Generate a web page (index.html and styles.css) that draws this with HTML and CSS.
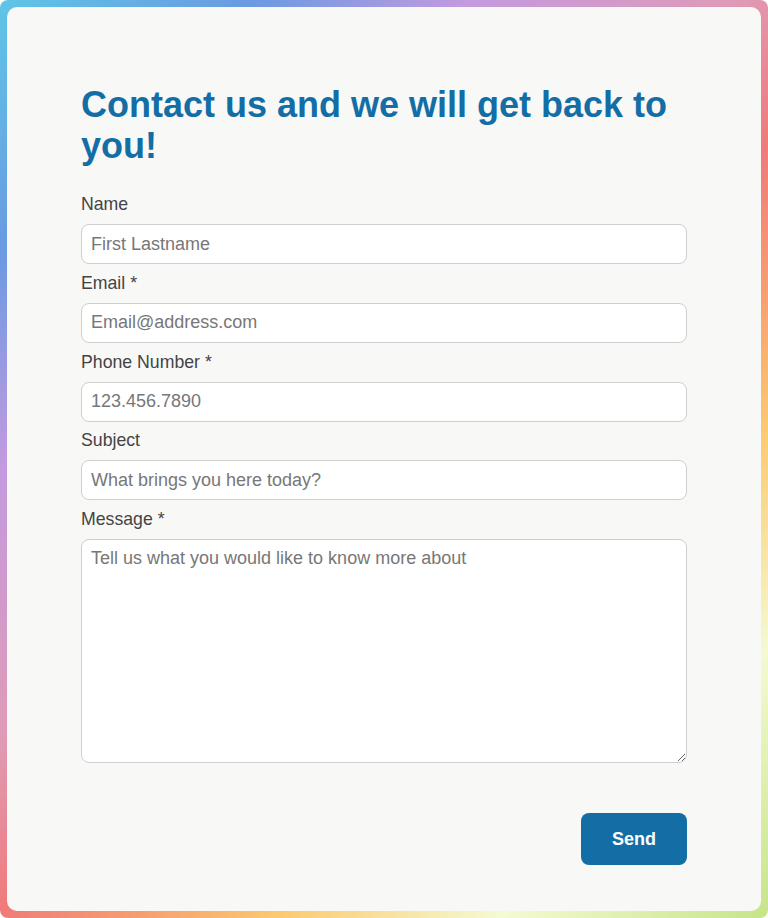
FILE: index.html
```
<!DOCTYPE html>
<html lang="en">
<head>
<meta charset="utf-8">
<title>Contact</title>
<link rel="stylesheet" href="styles.css">
</head>
<body>
<div class="frame">
  <main class="card">
    <h1 class="title">Contact us and we will get back to you!</h1>
    <form class="form">
      <label class="label" for="name">Name</label>
      <input class="field" id="name" type="text" placeholder="First Lastname">
      <label class="label" for="email">Email *</label>
      <input class="field" id="email" type="email" placeholder="Email@address.com">
      <label class="label" for="phone">Phone Number *</label>
      <input class="field" id="phone" type="tel" placeholder="123.456.7890">
      <label class="label" for="subject">Subject</label>
      <input class="field" id="subject" type="text" placeholder="What brings you here today?">
      <label class="label" for="message">Message *</label>
      <textarea class="field area" id="message" placeholder="Tell us what you would like to know more about"></textarea>
      <div class="actions">
        <button class="send" type="button">Send</button>
      </div>
    </form>
  </main>
</div>
</body>
</html>
```
FILE: styles.css
```
html, body {
  margin: 0;
  padding: 0;
  background: #ffffff;
}
body {
  font-family: "Liberation Sans", Arial, sans-serif;
}
.frame {
  width: 768px;
  height: 918px;
  box-sizing: border-box;
  padding: 7px;
  border-radius: 8px;
  background: linear-gradient(135deg,
    #5ec6e6 0%,
    #6a9ae2 15%,
    #c49ae0 28%,
    #e09ab6 44%,
    #f07a7a 54%,
    #f7a070 63%,
    #fcca70 71%,
    #f5fad2 84%,
    #c6e488 100%);
}
.card {
  height: 100%;
  box-sizing: border-box;
  background: #f8f8f7;
  border-radius: 10px;
  padding: 77px 74px 0 74px;
}
.title {
  margin: 0 0 28px 0;
  font-size: 36px;
  line-height: 41px;
  font-weight: 700;
  color: #136ea5;
}
.form {
  display: flex;
  flex-direction: column;
}
.label {
  font-size: 17.7px;
  line-height: 20px;
  color: #444444;
  margin: 8.75px 0 10px 0;
}
.label:first-child {
  margin-top: 0;
}
.field {
  box-sizing: border-box;
  width: 606px;
  height: 40px;
  border: 1px solid #cfcfcf;
  border-radius: 8px;
  background: #ffffff;
  padding: 0 9px;
  font-family: "Liberation Sans", Arial, sans-serif;
  font-size: 18px;
  color: #333;
  margin: 0;
}
.field::placeholder {
  color: #777777;
}
.area {
  height: 224px;
  padding: 8px 9px;
  resize: vertical;
  line-height: 20px;
}
.actions {
  display: flex;
  justify-content: flex-end;
  margin-top: 50px;
}
.send {
  width: 106px;
  height: 52px;
  border: none;
  border-radius: 8px;
  background: #126ea5;
  color: #ffffff;
  font-family: "Liberation Sans", Arial, sans-serif;
  font-size: 18px;
  font-weight: 700;
}
```
